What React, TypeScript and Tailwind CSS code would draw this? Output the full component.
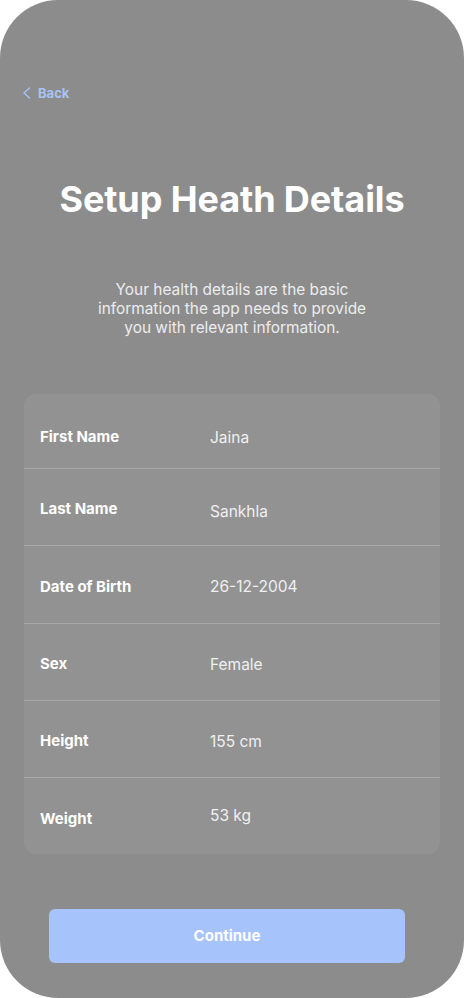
import React from 'react';

const rows = [
  { label: 'First Name', value: 'Jaina', h: 'h-[75px] pt-[13px]', v: '' },
  { label: 'Last Name', value: 'Sankhla', h: 'h-[77px] pt-[5px]', v: 'mt-[5px]' },
  { label: 'Date of Birth', value: '26-12-2004', h: 'h-[78px] pt-[5px]', v: '' },
  { label: 'Sex', value: 'Female', h: 'h-[77px] pt-[5px]', v: '' },
  { label: 'Height', value: '155 cm', h: 'h-[77px] pt-[5px]', v: '' },
  { label: 'Weight', value: '53 kg', h: 'h-[76px] pt-[6px]', v: '-mt-[6px]' },
];

export default function App() {
  return (
    <div className="w-[464px] h-[998px] bg-white" style={{ fontFamily: 'Inter, "Noto Sans", sans-serif' }}>
      <div className="h-full rounded-[58px] bg-[#8c8c8c] flex flex-col px-6">
        {/* Back */}
        <button className="mt-[84px] self-start -ml-[2px] flex items-center gap-[7px] text-[#a6c3f6] text-[13px] font-bold leading-[18px]">
          <svg width="9" height="12" viewBox="0 0 9 12" fill="none">
            <path d="M7.5 1 L2 6 L7.5 11" stroke="currentColor" strokeWidth="1.4" strokeLinecap="round" strokeLinejoin="round" />
          </svg>
          Back
        </button>

        <h1 className="mt-[77px] text-center text-white font-bold text-[36px] leading-[40px] tracking-[-0.1px]">
          Setup Heath Details
        </h1>

        <p className="mt-[61px] mx-auto w-[282px] text-center text-[#ececec] text-[15.4px] leading-[19px]">
          Your health details are the basic information the app needs to provide you with relevant information.
        </p>

        <div className="mt-[57px] rounded-[12px] bg-[#929292] overflow-hidden">
          {rows.map((r, i) => (
            <div
              key={r.label}
              className={`flex items-center px-4 ${r.h} ${i < rows.length - 1 ? 'border-b border-[#a8a8a8]' : ''}`}
            >
              <span className="w-[170px] text-white font-bold text-[15px]">{r.label}</span>
              <span className={`text-[#f0f0f0] text-[15.5px] ${r.v}`}>{r.value}</span>
            </div>
          ))}
        </div>

        <button className="mt-[55px] self-start ml-[25px] w-[356px] h-[54px] rounded-[6px] bg-[#a6c3fb] text-white font-bold text-[15px]">
          Continue
        </button>
      </div>
    </div>
  );
}
